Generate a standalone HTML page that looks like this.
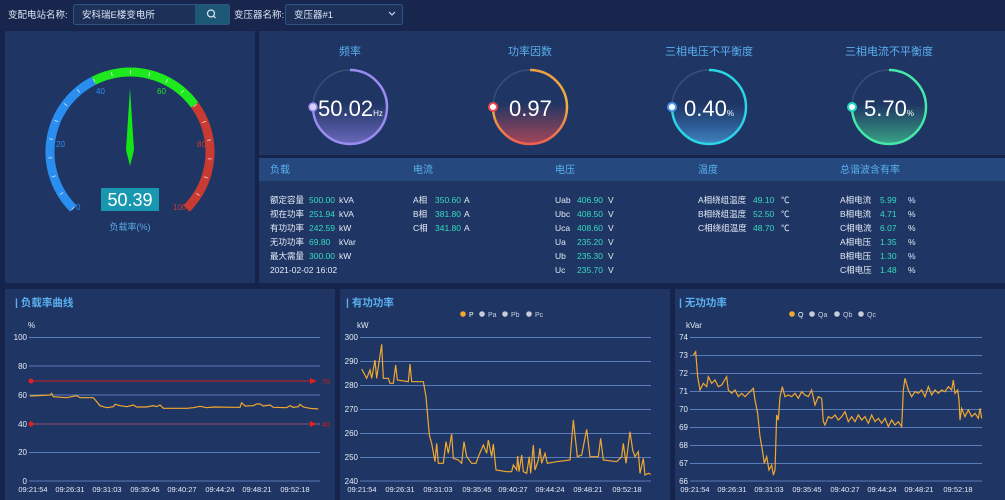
<!DOCTYPE html>
<html><head><meta charset="utf-8"><style>
html,body{margin:0;padding:0;background:#16234b;width:1005px;height:500px;overflow:hidden}
svg{display:block}
text{font-family:"Liberation Sans","Noto Sans CJK SC",sans-serif}
</style></head><body>
<svg width="1005" height="500" viewBox="0 0 1005 500" xmlns="http://www.w3.org/2000/svg">
<defs>
<linearGradient id="gf" x1="0" y1="0" x2="0" y2="1"><stop offset="0.45" stop-color="#8a7ee0" stop-opacity="0"/><stop offset="1" stop-color="#8a7ee0" stop-opacity="0.7"/></linearGradient>
<linearGradient id="gp" x1="0" y1="0" x2="0" y2="1"><stop offset="0.45" stop-color="#e0505a" stop-opacity="0"/><stop offset="1" stop-color="#d04a55" stop-opacity="0.75"/></linearGradient>
<linearGradient id="gv" x1="0" y1="0" x2="0" y2="1"><stop offset="0.45" stop-color="#3a8ad8" stop-opacity="0"/><stop offset="1" stop-color="#4a9ee0" stop-opacity="0.75"/></linearGradient>
<linearGradient id="gc" x1="0" y1="0" x2="0" y2="1"><stop offset="0.45" stop-color="#40c090" stop-opacity="0"/><stop offset="1" stop-color="#40c890" stop-opacity="0.75"/></linearGradient>
<linearGradient id="pfarc" x1="0" y1="0" x2="0" y2="1"><stop offset="0" stop-color="#f0a040"/><stop offset="0.5" stop-color="#f0b040"/><stop offset="1" stop-color="#f06050"/></linearGradient>
</defs>
<!-- top bar -->
<rect x="0" y="0" width="1005" height="30" fill="#18254c"/>
<text x="8" y="18" font-size="9.5" fill="#dfe6f5">变配电站名称:</text>
<rect x="73.5" y="4.5" width="156" height="20" rx="2" fill="#1c3058" stroke="#2c5585"/>
<rect x="195" y="5" width="34" height="19" fill="#1d5877"/>
<circle cx="211" cy="13.5" r="3.5" fill="none" stroke="#dfe6f5" stroke-width="1.2"/><line x1="213.5" y1="16" x2="215.5" y2="18" stroke="#dfe6f5" stroke-width="1.2"/>
<text x="82" y="18" font-size="9.5" fill="#dfe6f5">安科瑞E楼变电所</text>
<text x="234" y="18" font-size="9.5" fill="#dfe6f5">变压器名称:</text>
<rect x="285.5" y="4.5" width="117" height="20" rx="2" fill="#1c3058" stroke="#2c5585"/>
<text x="294" y="18" font-size="9.5" fill="#dfe6f5">变压器#1</text>
<polyline points="389,12 392,15 395,12" fill="none" stroke="#dfe6f5" stroke-width="1"/>

<!-- panels -->
<rect x="5" y="31" width="250" height="252" fill="#1f3563"/>
<rect x="259" y="31" width="746" height="124" fill="#1f3563"/>
<rect x="259" y="158" width="746" height="125" fill="#1f3563"/>
<rect x="259" y="158" width="746" height="23" fill="#25487f"/>
<rect x="5" y="289" width="330" height="211" fill="#1f3563"/>
<rect x="340" y="289" width="330" height="211" fill="#1f3563"/>
<rect x="675" y="289" width="330" height="211" fill="#1f3563"/>

<!-- gauge -->
<g fill="none" stroke-width="9">
<path d="M73.4,208.6 A80,80 0 0 1 93.7,80.7" stroke="#2a8ef0"/>
<path d="M93.7,80.7 A80,80 0 0 1 194.7,105" stroke="#1ee81e"/>
<path d="M194.7,105 A80,80 0 0 1 186.6,208.6" stroke="#c83a32"/>
<path d="M73.4,208.6 A80,80 0 1 1 186.6,208.6" stroke="#ffffff" stroke-opacity="0.8" stroke-width="4" stroke-dasharray="0.8 18.05" transform="translate(0,0)"/>
</g>
<text x="76" y="210" font-size="8" fill="#2a8ef0">0</text>
<text x="56" y="147" font-size="8" fill="#2a8ef0">20</text>
<text x="96" y="94" font-size="8" fill="#2a8ef0">40</text>
<text x="157" y="94" font-size="8" fill="#1ee81e">60</text>
<text x="197" y="147" font-size="8" fill="#c83a32">80</text>
<text x="173" y="210" font-size="8" fill="#c83a32">100</text>
<polygon points="130,88 126,150 130,166 134,150" fill="#14e614"/>
<rect x="101" y="188" width="58" height="23" fill="#1a97b0"/>
<text x="130" y="206" font-size="18" fill="#ffffff" text-anchor="middle">50.39</text>
<text x="130" y="230" font-size="9" fill="#5aaae6" text-anchor="middle">负载率(%)</text>

<!-- circles -->
<g font-size="11" fill="#5ab0f0" text-anchor="middle">
<text x="350" y="55">频率</text><text x="530" y="55">功率因数</text><text x="709" y="55">三相电压不平衡度</text><text x="889" y="55">三相电流不平衡度</text>
</g>
<g fill="none" stroke-width="2.5">
<circle cx="350" cy="107" r="37" fill="url(#gf)" stroke="#3a4e7c" stroke-width="1.5"/>
<path d="M350,70 A37,37 0 1 1 313,107" stroke="#9a8cf0"/>
<circle cx="530" cy="107" r="37" fill="url(#gp)" stroke="#3a4e7c" stroke-width="1.5"/>
<path d="M530,70 A37,37 0 1 1 493,107" stroke="url(#pfarc)"/>
<circle cx="709" cy="107" r="37" fill="url(#gv)" stroke="#3a4e7c" stroke-width="1.5"/>
<path d="M709,70 A37,37 0 1 1 672,107" stroke="#2ad6e6"/>
<circle cx="889" cy="107" r="37" fill="url(#gc)" stroke="#3a4e7c" stroke-width="1.5"/>
<path d="M889,70 A37,37 0 1 1 852,107" stroke="#46e8a8"/>
</g>
<circle cx="313" cy="107" r="4" fill="#d8d4ff" stroke="#9a8cf0" stroke-width="1.5"/>
<circle cx="493" cy="107" r="4" fill="#fff" stroke="#f04a50" stroke-width="2"/>
<circle cx="672" cy="107" r="4" fill="#fff" stroke="#4a9ef0" stroke-width="2"/>
<circle cx="852" cy="107" r="4" fill="#fff" stroke="#20d8c0" stroke-width="2"/>
<g fill="#fff">
<text x="318" y="116" font-size="22">50.02<tspan font-size="8">Hz</tspan></text>
<text x="509" y="116" font-size="22">0.97</text>
<text x="684" y="116" font-size="22">0.40<tspan font-size="8">%</tspan></text>
<text x="864" y="116" font-size="22">5.70<tspan font-size="8">%</tspan></text>
</g>

<!-- table -->
<g font-size="10" fill="#5ab0f0"><text x="270" y="173">负载</text><text x="413" y="173">电流</text><text x="555" y="173">电压</text><text x="698" y="173">温度</text><text x="840" y="173">总谐波含有率</text></g>
<g font-size="8.5" fill="#e6ecf8">
<text x="270" y="203">额定容量</text><text x="339" y="203">kVA</text>
<text x="270" y="217">视在功率</text><text x="339" y="217">kVA</text>
<text x="270" y="231">有功功率</text><text x="339" y="231">kW</text>
<text x="270" y="245">无功功率</text><text x="339" y="245">kVar</text>
<text x="270" y="259">最大需量</text><text x="339" y="259">kW</text>
<text x="270" y="273">2021-02-02 16:02</text>
<text x="413" y="203">A相</text><text x="464" y="203">A</text>
<text x="413" y="217">B相</text><text x="464" y="217">A</text>
<text x="413" y="231">C相</text><text x="464" y="231">A</text>
<text x="555" y="203">Uab</text><text x="608" y="203">V</text>
<text x="555" y="217">Ubc</text><text x="608" y="217">V</text>
<text x="555" y="231">Uca</text><text x="608" y="231">V</text>
<text x="555" y="245">Ua</text><text x="608" y="245">V</text>
<text x="555" y="259">Ub</text><text x="608" y="259">V</text>
<text x="555" y="273">Uc</text><text x="608" y="273">V</text>
<text x="698" y="203">A相绕组温度</text><text x="781" y="203">℃</text>
<text x="698" y="217">B相绕组温度</text><text x="781" y="217">℃</text>
<text x="698" y="231">C相绕组温度</text><text x="781" y="231">℃</text>
<text x="840" y="203">A相电流</text><text x="908" y="203">%</text>
<text x="840" y="217">B相电流</text><text x="908" y="217">%</text>
<text x="840" y="231">C相电流</text><text x="908" y="231">%</text>
<text x="840" y="245">A相电压</text><text x="908" y="245">%</text>
<text x="840" y="259">B相电压</text><text x="908" y="259">%</text>
<text x="840" y="273">C相电压</text><text x="908" y="273">%</text>
</g>
<g font-size="8.5" fill="#36dcc0">
<text x="309" y="203">500.00</text><text x="309" y="217">251.94</text><text x="309" y="231">242.59</text><text x="309" y="245">69.80</text><text x="309" y="259">300.00</text>
<text x="435" y="203">350.60</text><text x="435" y="217">381.80</text><text x="435" y="231">341.80</text>
<text x="577" y="203">406.90</text><text x="577" y="217">408.50</text><text x="577" y="231">408.60</text><text x="577" y="245">235.20</text><text x="577" y="259">235.30</text><text x="577" y="273">235.70</text>
<text x="753" y="203">49.10</text><text x="753" y="217">52.50</text><text x="753" y="231">48.70</text>
<text x="880" y="203">5.99</text><text x="880" y="217">4.71</text><text x="880" y="231">6.07</text><text x="880" y="245">1.35</text><text x="880" y="259">1.30</text><text x="880" y="273">1.48</text>
</g>

<!-- chart titles -->
<g font-size="10.5" font-weight="bold" fill="#5ab0f0">
<text x="15" y="306">| 负载率曲线</text><text x="346" y="306">| 有功功率</text><text x="679" y="306">| 无功功率</text>
</g>
<g font-size="8" fill="#e6ecf8"><text x="28" y="328">%</text><text x="357" y="328">kW</text><text x="686" y="328">kVar</text></g>

<!-- legends -->
<g font-size="7" fill="#c8d0e0">
<circle cx="463" cy="314" r="2.8" fill="#f0a830"/><text x="469" y="317" fill="#fff">P</text>
<circle cx="482" cy="314" r="2.8" fill="#c8ccd8"/><text x="488" y="317">Pa</text>
<circle cx="505" cy="314" r="2.8" fill="#c8ccd8"/><text x="511" y="317">Pb</text>
<circle cx="529" cy="314" r="2.8" fill="#c8ccd8"/><text x="535" y="317">Pc</text>
<circle cx="792" cy="314" r="2.8" fill="#f0a830"/><text x="798" y="317" fill="#fff">Q</text>
<circle cx="812" cy="314" r="2.8" fill="#c8ccd8"/><text x="818" y="317">Qa</text>
<circle cx="837" cy="314" r="2.8" fill="#c8ccd8"/><text x="843" y="317">Qb</text>
<circle cx="861" cy="314" r="2.8" fill="#c8ccd8"/><text x="867" y="317">Qc</text>
</g>

<!-- chart1 -->
<g stroke="#5a7cb8" stroke-width="1">
<line x1="29" y1="337.5" x2="320" y2="337.5"/><line x1="29" y1="366" x2="320" y2="366"/><line x1="29" y1="395" x2="320" y2="395"/><line x1="29" y1="424" x2="320" y2="424"/><line x1="29" y1="452.5" x2="320" y2="452.5"/><line x1="29" y1="481" x2="320" y2="481"/>
</g>
<g font-size="8" fill="#e6ecf8" text-anchor="end"><text x="27" y="340">100</text><text x="27" y="369">80</text><text x="27" y="398">60</text><text x="27" y="427">40</text><text x="27" y="455">20</text><text x="27" y="484">0</text></g>
<line x1="31" y1="381" x2="314" y2="381" stroke="#d02020" stroke-width="1"/>
<line x1="31" y1="424" x2="314" y2="424" stroke="#d02020" stroke-width="1" stroke-dasharray="1,1"/>
<circle cx="31" cy="381" r="2.5" fill="#e02020"/><circle cx="31" cy="424" r="2.5" fill="#e02020"/>
<polygon points="310,378 317,381 310,384" fill="#e02020"/><polygon points="310,421 317,424 310,427" fill="#e02020"/>
<text x="322" y="384" font-size="7" fill="#d02020">70</text><text x="322" y="427" font-size="7" fill="#d02020">40</text>
<g transform="translate(0,285) scale(0.33333)">
<polyline vector-effect="non-scaling-stroke" fill="none" stroke="#f0a830" stroke-width="1.2" points="90,333 150,330 155,325 160,335 200,338 230,332 240,338 280,338 290,350 300,362 320,368 340,365 345,358 360,362 380,365 400,360 410,366 440,366 460,362 470,365 480,360 490,370 540,370 560,370 580,368 600,364 620,368 640,366 700,367 720,367 725,353 735,363 760,362 770,357 780,357 790,363 810,360 820,367 860,368 870,362 880,367 895,365 900,358 910,366 920,368 930,370 955,372"/>
</g>

<!-- chart2 -->
<g stroke="#5a7cb8" stroke-width="1">
<line x1="360" y1="337.5" x2="651" y2="337.5"/><line x1="360" y1="361.5" x2="651" y2="361.5"/><line x1="360" y1="385.5" x2="651" y2="385.5"/><line x1="360" y1="409.5" x2="651" y2="409.5"/><line x1="360" y1="433.5" x2="651" y2="433.5"/><line x1="360" y1="457.5" x2="651" y2="457.5"/><line x1="360" y1="481" x2="651" y2="481"/>
</g>
<g font-size="8" fill="#e6ecf8" text-anchor="end"><text x="358" y="340">300</text><text x="358" y="364">290</text><text x="358" y="388">280</text><text x="358" y="412">270</text><text x="358" y="436">260</text><text x="358" y="460">250</text><text x="358" y="484">240</text></g>
<g transform="translate(340,290) scale(0.33333)">
<polyline vector-effect="non-scaling-stroke" fill="none" stroke="#f0a830" stroke-width="1.2" points="65,237 80,265 90,240 95,265 105,210 110,265 125,163 130,265 145,265 150,280 160,280 167,225 172,270 205,275 210,222 215,275 250,275 258,320 268,435 275,460 285,515 290,460 295,520 310,520 318,455 325,490 335,432 340,505 355,510 365,520 372,455 380,500 395,520 408,520 415,500 430,465 440,490 445,450 455,500 460,462 468,540 500,545 515,545 520,525 530,540 533,498 537,545 545,495 550,545 560,550 568,500 572,550 580,465 585,540 595,510 600,475 605,520 615,490 622,520 650,515 690,510 700,390 712,500 725,495 740,418 750,500 775,500 782,445 790,510 830,515 845,500 850,460 858,520 870,425 878,480 885,500 895,485 900,550 910,505 915,555 925,550 932,553"/>
</g>

<!-- chart3 -->
<g stroke="#5a7cb8" stroke-width="1">
<line x1="690" y1="337.5" x2="982" y2="337.5"/><line x1="690" y1="355.5" x2="982" y2="355.5"/><line x1="690" y1="373.5" x2="982" y2="373.5"/><line x1="690" y1="391.5" x2="982" y2="391.5"/><line x1="690" y1="409.5" x2="982" y2="409.5"/><line x1="690" y1="427.5" x2="982" y2="427.5"/><line x1="690" y1="445.5" x2="982" y2="445.5"/><line x1="690" y1="463.5" x2="982" y2="463.5"/><line x1="690" y1="481" x2="982" y2="481"/>
</g>
<g font-size="8" fill="#e6ecf8" text-anchor="end"><text x="688" y="340">74</text><text x="688" y="358">73</text><text x="688" y="376">72</text><text x="688" y="394">71</text><text x="688" y="412">70</text><text x="688" y="430">69</text><text x="688" y="448">68</text><text x="688" y="466">67</text><text x="688" y="484">66</text></g>
<g transform="translate(675,290) scale(0.33333)">
<polyline vector-effect="non-scaling-stroke" fill="none" stroke="#f0a830" stroke-width="1.2" points="55,195 62,185 68,260 75,300 85,280 95,290 100,260 110,280 120,270 130,290 140,285 155,260 160,300 170,310 180,300 190,320 200,310 210,320 225,305 235,295 240,330 248,370 255,440 262,480 268,520 275,500 282,540 290,525 295,555 300,540 305,375 310,390 315,320 322,290 330,320 340,315 350,320 360,310 370,325 380,305 390,315 400,320 410,300 420,345 430,320 440,325 445,395 450,405 460,380 470,385 480,375 490,390 500,380 510,365 520,395 530,380 540,395 550,375 560,390 570,380 580,400 590,375 600,395 610,385 620,400 630,385 640,410 650,390 660,405 670,395 680,410 685,300 690,265 700,300 710,320 720,305 730,310 740,300 750,320 760,290 770,315 780,300 790,310 800,300 810,305 820,290 830,300 835,270 840,310 848,300 852,330 855,390 860,355 870,380 880,360 890,380 900,370 910,385 915,355 920,385"/>
</g>

<!-- x labels -->
<g font-size="7.5" fill="#e6ecf8" text-anchor="middle">
<text x="33" y="492">09:21:54</text><text x="70" y="492">09:26:31</text><text x="107" y="492">09:31:03</text><text x="145" y="492">09:35:45</text><text x="182" y="492">09:40:27</text><text x="220" y="492">09:44:24</text><text x="257" y="492">09:48:21</text><text x="295" y="492">09:52:18</text>
<text x="362" y="492">09:21:54</text><text x="400" y="492">09:26:31</text><text x="438" y="492">09:31:03</text><text x="477" y="492">09:35:45</text><text x="513" y="492">09:40:27</text><text x="550" y="492">09:44:24</text><text x="588" y="492">09:48:21</text><text x="627" y="492">09:52:18</text>
<text x="695" y="492">09:21:54</text><text x="732" y="492">09:26:31</text><text x="769" y="492">09:31:03</text><text x="807" y="492">09:35:45</text><text x="845" y="492">09:40:27</text><text x="882" y="492">09:44:24</text><text x="919" y="492">09:48:21</text><text x="958" y="492">09:52:18</text>
</g>
</svg>
</body></html>
